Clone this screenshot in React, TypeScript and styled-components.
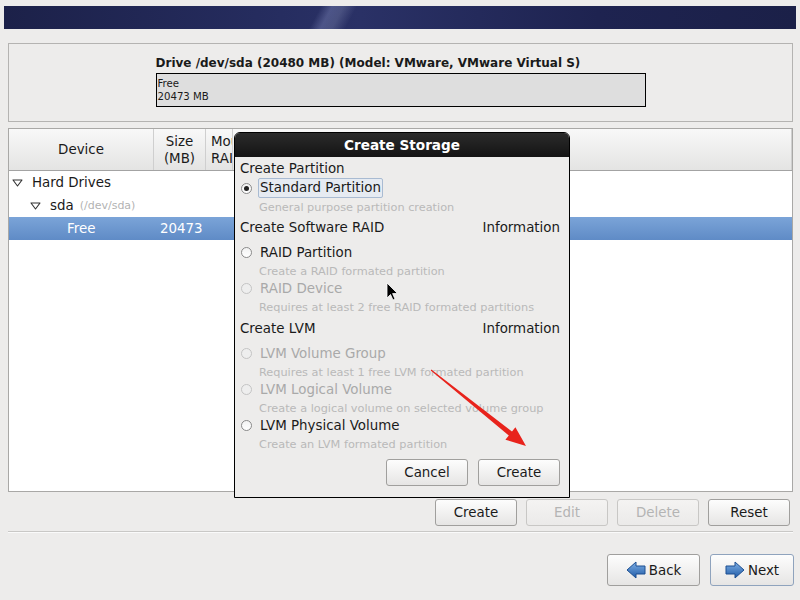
import styled, { createGlobalStyle } from "styled-components";

const GlobalStyle = createGlobalStyle`
  html, body {
    margin: 0;
    padding: 0;
    background: #edeceb;
    font-family: "DejaVu Sans", "Liberation Sans", sans-serif;
    font-size: 13.4px;
    color: #1a1a1a;
  }
`;

const Page = styled.div`
  position: relative;
  width: 800px;
  height: 600px;
  padding-top: 6px;
  box-sizing: border-box;
  overflow: hidden;
`;

const Banner = styled.div`
  margin: 0 4px;
  height: 23px;
  background:
    linear-gradient(118deg, transparent 0, transparent 280px, rgba(160, 170, 220, 0.3) 290px,
      rgba(200, 210, 240, 0.2) 300px, transparent 312px, transparent 100%),
    linear-gradient(to right, #1c2149 0%, #262d60 35%, #2a3166 45%, #1e2350 75%, #1b2048 100%);
`;

const Main = styled.div`
  padding: 0 7px 0 8px;
`;

const DrivePanel = styled.div`
  margin-top: 14px;
  height: 79px;
  box-sizing: border-box;
  border: 1px solid #b4b3b1;
  display: flex;
  flex-direction: column;
  align-items: center;
  padding-top: 10px;
`;

const DriveInner = styled.div`
  width: 490px;
`;

const DriveTitle = styled.div`
  font-weight: bold;
  font-size: 12px;
  height: 19px;
  line-height: 19px;
`;

const DriveBar = styled.div`
  height: 34px;
  box-sizing: border-box;
  border: 1px solid #000;
  background: #dedede;
  font-family: "DejaVu Sans Condensed", "DejaVu Sans", sans-serif;
  font-size: 11.3px;
  line-height: 13px;
  padding: 3px 1px;
`;

const TreePanel = styled.div`
  margin-top: 6px;
  height: 364px;
  box-sizing: border-box;
  border: 1px solid #a9a8a6;
  background: #fff;
`;

const TreeHeader = styled.div`
  display: grid;
  grid-template-columns: 145px 52px 27px 1fr;
  height: 41px;
  border-bottom: 1px solid #a3a3a3;
  background: linear-gradient(#f8f8f8, #e4e4e3);
`;

const HeaderCell = styled.div<{ align?: string }>`
  display: flex;
  align-items: center;
  justify-content: ${(p) => p.align || "center"};
  text-align: ${(p) => (p.align ? "left" : "center")};
  line-height: 17px;
  border-right: 1px solid #cfcfcf;
  padding-left: ${(p) => (p.align ? "5px" : "0")};
  white-space: pre;
  overflow: hidden;
`;

const TreeRow = styled.div<{ selected?: boolean }>`
  display: grid;
  grid-template-columns: 145px 1fr;
  height: 23px;
  align-items: center;
  background: ${(p) => (p.selected ? "linear-gradient(#7ba4d8, #5f8bc6)" : "transparent")};
  color: ${(p) => (p.selected ? "#fff" : "#1a1a1a")};
`;

const DeviceCell = styled.div<{ indent: number }>`
  display: flex;
  align-items: center;
  padding-left: ${(p) => p.indent}px;
`;

const DevPath = styled.span`
  color: #b3b3b3;
  font-size: 11px;
  margin-left: 6px;
`;

const SizeCell = styled.div`
  padding-left: 6px;
`;

const ActionRow = styled.div`
  display: flex;
  justify-content: flex-end;
  gap: 9px;
  margin-top: 7px;
  padding-right: 3px;
`;

const Button = styled.button<{ w?: number; h?: number; primary?: boolean }>`
  width: ${(p) => p.w || 82}px;
  height: ${(p) => p.h || 27}px;
  box-sizing: border-box;
  border: 1px solid ${(p) => (p.primary ? "#8fa3bd" : "#a09f9d")};
  border-radius: 3px;
  background: linear-gradient(#fdfdfd, #e6e5e4);
  font-family: inherit;
  font-size: 13.4px;
  color: #1a1a1a;
  padding: 0;
  display: flex;
  align-items: center;
  justify-content: center;
  gap: 3px;

  &:disabled {
    color: #b4b4b4;
    border-color: #c8c7c5;
    background: linear-gradient(#f4f3f2, #ebeae9);
  }
`;

const Separator = styled.div`
  margin-top: 5px;
  height: 1px;
  background: #c9c8c6;
  border-bottom: 1px solid #fafafa;
`;

const NavRow = styled.div`
  display: flex;
  justify-content: flex-end;
  gap: 10px;
  margin-top: 21px;
  margin-right: -1px;
`;

const Dialog = styled.div`
  position: absolute;
  left: 234px;
  top: 132px;
  width: 336px;
  height: 366px;
  box-sizing: border-box;
  border: 1px solid #000;
  border-radius: 6px 6px 0 0;
  background: #edeceb;
  overflow: hidden;
`;

const DialogTitle = styled.div`
  height: 24px;
  background: linear-gradient(#2b2b2b, #141414);
  color: #fff;
  font-weight: bold;
  font-size: 13.6px;
  display: flex;
  align-items: center;
  justify-content: center;
`;

const DialogBody = styled.div`
  padding: 0 9px 0 5px;
`;

const SectionHead = styled.div<{ gap: number }>`
  display: flex;
  justify-content: space-between;
  height: 20px;
  align-items: center;
  margin-top: ${(p) => p.gap}px;
`;

const Option = styled.div<{ disabled?: boolean; gap?: number }>`
  display: flex;
  align-items: center;
  height: 20px;
  margin-top: ${(p) => p.gap || 0}px;
  color: ${(p) => (p.disabled ? "#a9a9a9" : "#1a1a1a")};
`;

const Radio = styled.span<{ checked?: boolean; disabled?: boolean }>`
  width: 11px;
  height: 11px;
  box-sizing: border-box;
  border-radius: 50%;
  border: 1px solid ${(p) => (p.disabled ? "#c4c4c4" : "#8a8a8a")};
  background: ${(p) => (p.disabled ? "#eeeeee" : "linear-gradient(#f2f2f2, #ffffff)")};
  margin: 0 8px 0 1px;
  display: flex;
  align-items: center;
  justify-content: center;

  &::after {
    content: "";
    display: ${(p) => (p.checked ? "block" : "none")};
    width: 5px;
    height: 5px;
    border-radius: 50%;
    background: #222;
  }
`;

const Focused = styled.span`
  border: 1px solid #a9bbd2;
  background: #e6ebf2;
  border-radius: 2px;
  padding: 1px 1px 2px 1px;
  margin-left: -2px;
`;

const Desc = styled.div`
  height: 16px;
  box-sizing: border-box;
  padding: 4px 0 0 19px;
  line-height: 12px;
  font-size: 11.3px;
  color: #b9b9b9;
  white-space: nowrap;
`;

const DialogButtons = styled.div`
  display: flex;
  justify-content: flex-end;
  gap: 10px;
  margin-top: 8px;
`;

const Overlay = styled.svg`
  position: absolute;
  left: 0;
  top: 0;
  pointer-events: none;
`;

const Expander = () => (
  <svg width="11" height="8" viewBox="0 0 11 8" style={{ marginRight: 9 }}>
    <polygon points="1,1 10,1 5.5,7" fill="none" stroke="#333" strokeWidth="1.1" strokeLinejoin="round" />
  </svg>
);

const BlueArrow = ({ dir }: { dir: "left" | "right" }) => (
  <svg width="20" height="18" viewBox="0 0 20 18">
    <defs>
      <linearGradient id={`ba-${dir}`} x1="0" y1="0" x2="0" y2="1">
        <stop offset="0" stopColor="#7fb0e6" />
        <stop offset="1" stopColor="#1f5aa6" />
      </linearGradient>
    </defs>
    <polygon
      points={dir === "left" ? "1,9 10,1 10,5 19,5 19,13 10,13 10,17" : "19,9 10,1 10,5 1,5 1,13 10,13 10,17"}
      fill={`url(#ba-${dir})`}
      stroke="#1c4f91"
      strokeWidth="1"
      strokeLinejoin="round"
    />
  </svg>
);

export default function App() {
  return (
    <>
      <GlobalStyle />
      <Page>
        <Banner />
        <Main>
          <DrivePanel>
            <DriveInner>
              <DriveTitle>Drive /dev/sda (20480 MB) (Model: VMware, VMware Virtual S)</DriveTitle>
              <DriveBar>
                <div>Free</div>
                <div>20473 MB</div>
              </DriveBar>
            </DriveInner>
          </DrivePanel>

          <TreePanel>
            <TreeHeader>
              <HeaderCell>Device</HeaderCell>
              <HeaderCell>{"Size\n(MB)"}</HeaderCell>
              <HeaderCell align="flex-start">{"Mount Point/\nRAID/Volume"}</HeaderCell>
              <HeaderCell />
            </TreeHeader>
            <TreeRow>
              <DeviceCell indent={3}>
                <Expander />
                Hard Drives
              </DeviceCell>
            </TreeRow>
            <TreeRow>
              <DeviceCell indent={21}>
                <Expander />
                sda<DevPath>(/dev/sda)</DevPath>
              </DeviceCell>
            </TreeRow>
            <TreeRow selected>
              <DeviceCell indent={58}>Free</DeviceCell>
              <SizeCell>20473</SizeCell>
            </TreeRow>
          </TreePanel>

          <ActionRow>
            <Button>Create</Button>
            <Button disabled>Edit</Button>
            <Button disabled>Delete</Button>
            <Button>Reset</Button>
          </ActionRow>
          <Separator />
          <NavRow>
            <Button w={93} h={32}>
              <BlueArrow dir="left" />
              Back
            </Button>
            <Button w={84} h={32} primary>
              <BlueArrow dir="right" />
              Next
            </Button>
          </NavRow>
        </Main>

        <Dialog>
          <DialogTitle>Create Storage</DialogTitle>
          <DialogBody>
            <SectionHead gap={1}>Create Partition</SectionHead>
            <Option>
              <Radio checked />
              <Focused>Standard Partition</Focused>
            </Option>
            <Desc>General purpose partition creation</Desc>

            <SectionHead gap={3}>
              <span>Create Software RAID</span>
              <span>Information</span>
            </SectionHead>
            <Option gap={5}>
              <Radio />
              RAID Partition
            </Option>
            <Desc>Create a RAID formated partition</Desc>
            <Option disabled>
              <Radio disabled />
              RAID Device
            </Option>
            <Desc>Requires at least 2 free RAID formated partitions</Desc>

            <SectionHead gap={4}>
              <span>Create LVM</span>
              <span>Information</span>
            </SectionHead>
            <Option disabled gap={5}>
              <Radio disabled />
              LVM Volume Group
            </Option>
            <Desc>Requires at least 1 free LVM formated partition</Desc>
            <Option disabled>
              <Radio disabled />
              LVM Logical Volume
            </Option>
            <Desc>Create a logical volume on selected volume group</Desc>
            <Option>
              <Radio />
              LVM Physical Volume
            </Option>
            <Desc>Create an LVM formated partition</Desc>

            <DialogButtons>
              <Button>Cancel</Button>
              <Button>Create</Button>
            </DialogButtons>
          </DialogBody>
        </Dialog>

        <Overlay width="800" height="600" viewBox="0 0 800 600">
          <polygon
            points="430.7,370.4 431.3,369.6 512,431.5 515.4,427.3 526,446 505.4,439.7 508.8,435.5"
            fill="#e8231c"
          />
          <path
            d="M387 283 L387 298 L390.5 294.5 L393 300 L395 299 L392.6 293.6 L397.5 293.5 Z"
            fill="#000"
            stroke="#fff"
            strokeWidth="0.8"
          />
        </Overlay>
      </Page>
    </>
  );
}
